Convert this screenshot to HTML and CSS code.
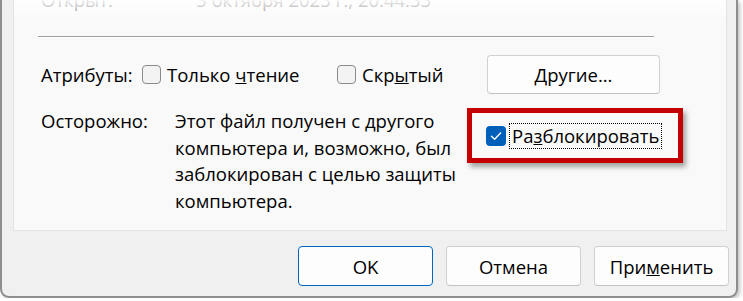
FILE: index.html
```html
<!DOCTYPE html>
<html>
  <head>
    <meta charset="UTF-8" />
    <title>Свойства</title>
    <link rel="stylesheet" href="styles.css">
  </head>
  <body>
    <div class="window">
      <div class="panel">
        <div class="info-row">
          <span class="info-label">Открыт:</span>
          <span>5 октября 2023 г., 20:44:33</span>
        </div>
        <div class="fade"></div>
        <div class="separator"></div>

        <div class="attr-row">
          <span class="label attr-label">Атрибуты:</span>
          <label class="check first-check"><span class="box"></span><span>Только <u>ч</u>тение</span></label>
          <label class="check second-check"><span class="box"></span><span>Скр<u>ы</u>тый</span></label>
          <button class="btn btn-other"><u>Д</u>ругие...</button>
        </div>

        <div class="warn-row">
          <span class="label warn-label">Осторожно:</span>
          <p class="warn-text">
            Этот файл получен с другого<br />
            компьютера и, возможно, был<br />
            заблокирован с целью защиты<br />
            компьютера.
          </p>
          <div class="unblock">
            <span class="box checked">
              <svg width="20" height="20" viewBox="0 0 20 20">
                <path d="M5.5 10.2 L8.6 13.2 L14.6 7" fill="none" stroke="#fff" stroke-width="1.4" stroke-linecap="round" stroke-linejoin="round" />
              </svg>
            </span>
            <span class="focus">Ра<u>з</u>блокировать</span>
          </div>
        </div>
      </div>

      <div class="actions">
        <button class="btn btn-action btn-default">OK</button>
        <button class="btn btn-action">Отмена</button>
        <button class="btn btn-action">При<u>м</u>енить</button>
      </div>
    </div>
  </body>
</html>
```

FILE: styles.css
```css
body {
  margin: 0;
  background: #ffffff;
  font-family: "Open Sans", "Liberation Sans", sans-serif;
  font-size: 18.5px;
  color: #000000;
}

.window {
  width: 738px;
  height: 298px;
  background: #f0f0f0;
  border: 2px solid #8e8e8e;
  border-top: none;
  border-radius: 0 0 9px 9px;
  box-shadow: 2px 2px 4px rgba(0, 0, 0, 0.25);
  padding: 0 9px 0 11px;
  box-sizing: border-box;
}

.panel {
  position: relative;
  height: 231px;
  background: #f9f9f9;
  border: 1px solid #e3e3e3;
  border-top: none;
  box-sizing: border-box;
  padding-left: 27px;
  overflow: hidden;
}

.info-row {
  display: flex;
  line-height: 26px;
  margin-top: -13px;
  color: #6e6e6e;
}

.info-label {
  width: 155px;
}

.fade {
  position: absolute;
  top: 0;
  left: 0;
  right: 0;
  height: 22px;
  background: linear-gradient(rgba(255, 255, 255, 0.9), rgba(249, 249, 249, 0));
}

.separator {
  margin: 23px 0 0 -3px;
  width: 616px;
  height: 1px;
  background: #a0a0a0;
  border-bottom: 1px solid #ffffff;
}

.attr-row {
  display: flex;
  align-items: center;
  height: 39px;
  margin-top: 17px;
}

.label {
  line-height: 26px;
}

.attr-label {
  width: 101px;
}

.check {
  display: flex;
  align-items: center;
  gap: 6px;
}

.first-check {
  width: 195px;
}

.second-check {
  width: 150px;
}

.box {
  display: inline-flex;
  width: 19px;
  height: 19px;
  box-sizing: border-box;
  border: 1px solid #8a8a8a;
  border-radius: 4px;
  background: #f3f3f3;
}

.box.checked {
  width: 20px;
  height: 20px;
  border: none;
  background: #005fb8;
}

.btn {
  font-family: inherit;
  font-size: 18.5px;
  color: #000000;
  background: #fdfdfd;
  border: 1px solid #d0d0d0;
  border-bottom-color: #c2c2c2;
  border-radius: 4px;
  padding: 0;
}

.btn-other {
  width: 173px;
  height: 39px;
}

.warn-row {
  display: flex;
  align-items: flex-start;
  margin-top: 14px;
}

.warn-label {
  width: 134px;
}

.warn-text {
  margin: 0;
  width: 292px;
  line-height: 26.5px;
}

.unblock {
  display: flex;
  align-items: center;
  gap: 5px;
  width: 216px;
  height: 55px;
  box-sizing: border-box;
  padding-left: 14px;
  border: 5px solid #c50000;
  box-shadow: 3px 4px 5px rgba(0, 0, 0, 0.35);
}

.focus {
  outline: 1px dotted #000000;
  outline-offset: 1px;
  line-height: 22px;
  padding: 0 1px;
}

.actions {
  display: flex;
  justify-content: flex-end;
  gap: 13px;
  margin-top: 15px;
  margin-right: -2px;
}

.btn-action {
  width: 135px;
  height: 40px;
}

.btn-default {
  border: 1px solid #0067c0;
}
```
